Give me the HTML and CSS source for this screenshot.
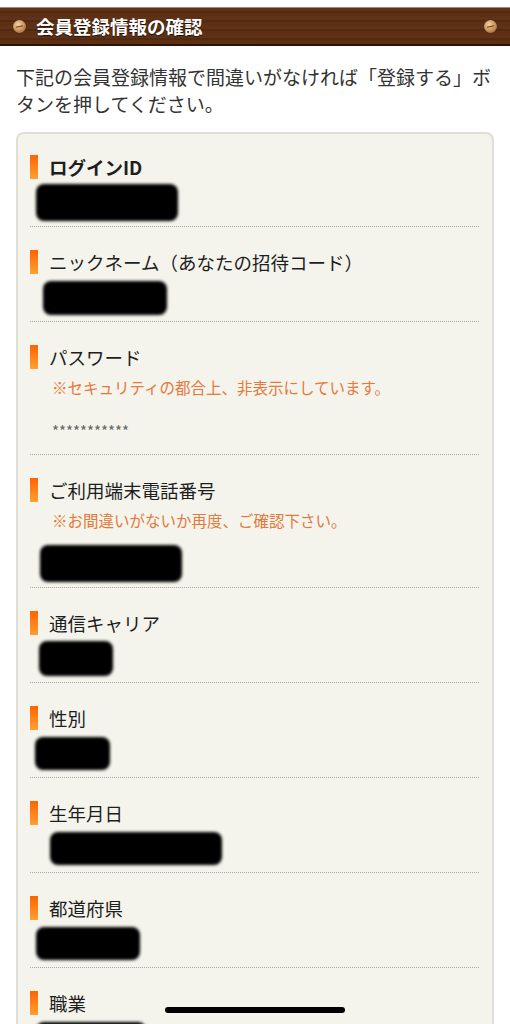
FILE: index.html
```html
<!DOCTYPE html>
<html lang="ja">
<head>
    <meta charset="UTF-8">
    <meta name="viewport" content="width=device-width, initial-scale=1.0">
    <title>会員登録情報の確認</title>
    <link rel="stylesheet" href="styles.css">
</head>
<body>
    <div class="title-bar">
        <span class="screw"></span>
        <h1>会員登録情報の確認</h1>
        <span class="screw screw-right"></span>
    </div>

    <p class="intro">下記の会員登録情報で間違いがなければ「登録する」ボタンを押してください。</p>

    <div class="confirm-box">
        <div class="item">
            <div class="label label-strong">ログインID</div>
            <div class="value"><span class="redact" style="margin-left:6px;width:142px;height:37px"></span></div>
        </div>
        <div class="item">
            <div class="label">ニックネーム（あなたの招待コード）</div>
            <div class="value"><span class="redact" style="margin-left:13px;width:124px;height:34px"></span></div>
        </div>
        <div class="item">
            <div class="label">パスワード</div>
            <p class="note">※セキュリティの都合上、非表示にしています。</p>
            <div class="value value-text">***********</div>
        </div>
        <div class="item">
            <div class="label">ご利用端末電話番号</div>
            <p class="note">※お間違いがないか再度、ご確認下さい。</p>
            <div class="value"><span class="redact" style="margin-left:10px;width:142px;height:37px"></span></div>
        </div>
        <div class="item">
            <div class="label">通信キャリア</div>
            <div class="value"><span class="redact" style="margin-left:9px;width:74px;height:35px"></span></div>
        </div>
        <div class="item">
            <div class="label">性別</div>
            <div class="value"><span class="redact" style="margin-left:5px;width:75px;height:33px"></span></div>
        </div>
        <div class="item">
            <div class="label">生年月日</div>
            <div class="value"><span class="redact" style="margin-left:20px;width:172px;height:33px"></span></div>
        </div>
        <div class="item">
            <div class="label">都道府県</div>
            <div class="value"><span class="redact" style="margin-left:6px;width:104px;height:33px"></span></div>
        </div>
        <div class="item">
            <div class="label">職業</div>
            <div class="value"><span class="redact" style="margin-left:6px;width:110px;height:33px"></span></div>
        </div>
    </div>

    <div class="home-indicator"></div>
</body>
</html>
```

FILE: styles.css
```css
body {
    margin: 0;
    background-color: #fff;
    font-family: "Noto Sans CJK JP", "Noto Sans", sans-serif;
    color: #333;
}

.title-bar {
    display: flex;
    align-items: center;
    height: 36px;
    margin-top: 7px;
    padding: 0 13px;
    background-color: #5a2c10;
    background-image: repeating-linear-gradient(180deg, rgba(255, 255, 255, 0.03) 0 3px, rgba(0, 0, 0, 0.08) 3px 5px, rgba(255, 255, 255, 0.02) 5px 9px);
    border-top: 1px solid #b9825a;
    border-bottom: 2px solid #2a1406;
}

.title-bar h1 {
    flex: 1;
    margin: 0 0 0 10px;
    font-size: 18.5px;
    font-weight: bold;
    color: #fff;
    text-shadow: 0 1px 1px #1e0d03;
    line-height: 36px;
}

.screw {
    position: relative;
    width: 13px;
    height: 13px;
    border-radius: 50%;
    background: radial-gradient(circle at 40% 35%, #f3d2a3, #c48e57 55%, #8a5528);
    box-shadow: 0 0 1px #2a1406;
}

.screw:after {
    content: '';
    position: absolute;
    top: 6px;
    left: 3px;
    width: 7px;
    height: 1px;
    background-color: #6b3d18;
    transform: rotate(-12deg);
}

.intro {
    margin: 17px 16px 15px;
    font-size: 19px;
    line-height: 27px;
    color: #333;
}

.confirm-box {
    margin: 0 16px;
    border: 2px solid #dfdfd6;
    border-bottom: none;
    border-radius: 8px 8px 0 0;
    background-color: #f4f4ec;
}

.item {
    margin: 0 13px 0 12px;
    padding-top: 21px;
    border-bottom: 1px dotted #a8a8a0;
}

.item + .item {
    padding-top: 23px;
}

.label {
    display: flex;
    align-items: center;
    height: 24px;
    font-size: 18.5px;
    font-weight: normal;
    color: #1e1e1e;
}

.label:before {
    content: '';
    flex: none;
    width: 8px;
    height: 24px;
    margin-right: 11px;
    background: linear-gradient(180deg, #ff6400, #ffa033);
}

.label-strong {
    font-weight: bold;
}

.note {
    margin: 6px 0 8px 22px;
    font-size: 15.5px;
    line-height: 24px;
    color: #e5783a;
}

.value {
    display: flex;
    align-items: center;
    height: 47px;
}

.value-text {
    padding-left: 22px;
    font-size: 15px;
    color: #666;
}

.redact {
    display: block;
    background-color: #000;
    border-radius: 8px;
    filter: blur(1.5px);
}

.home-indicator {
    position: fixed;
    left: 165px;
    bottom: 11px;
    width: 180px;
    height: 6px;
    border-radius: 3px;
    background-color: #000;
}
```
